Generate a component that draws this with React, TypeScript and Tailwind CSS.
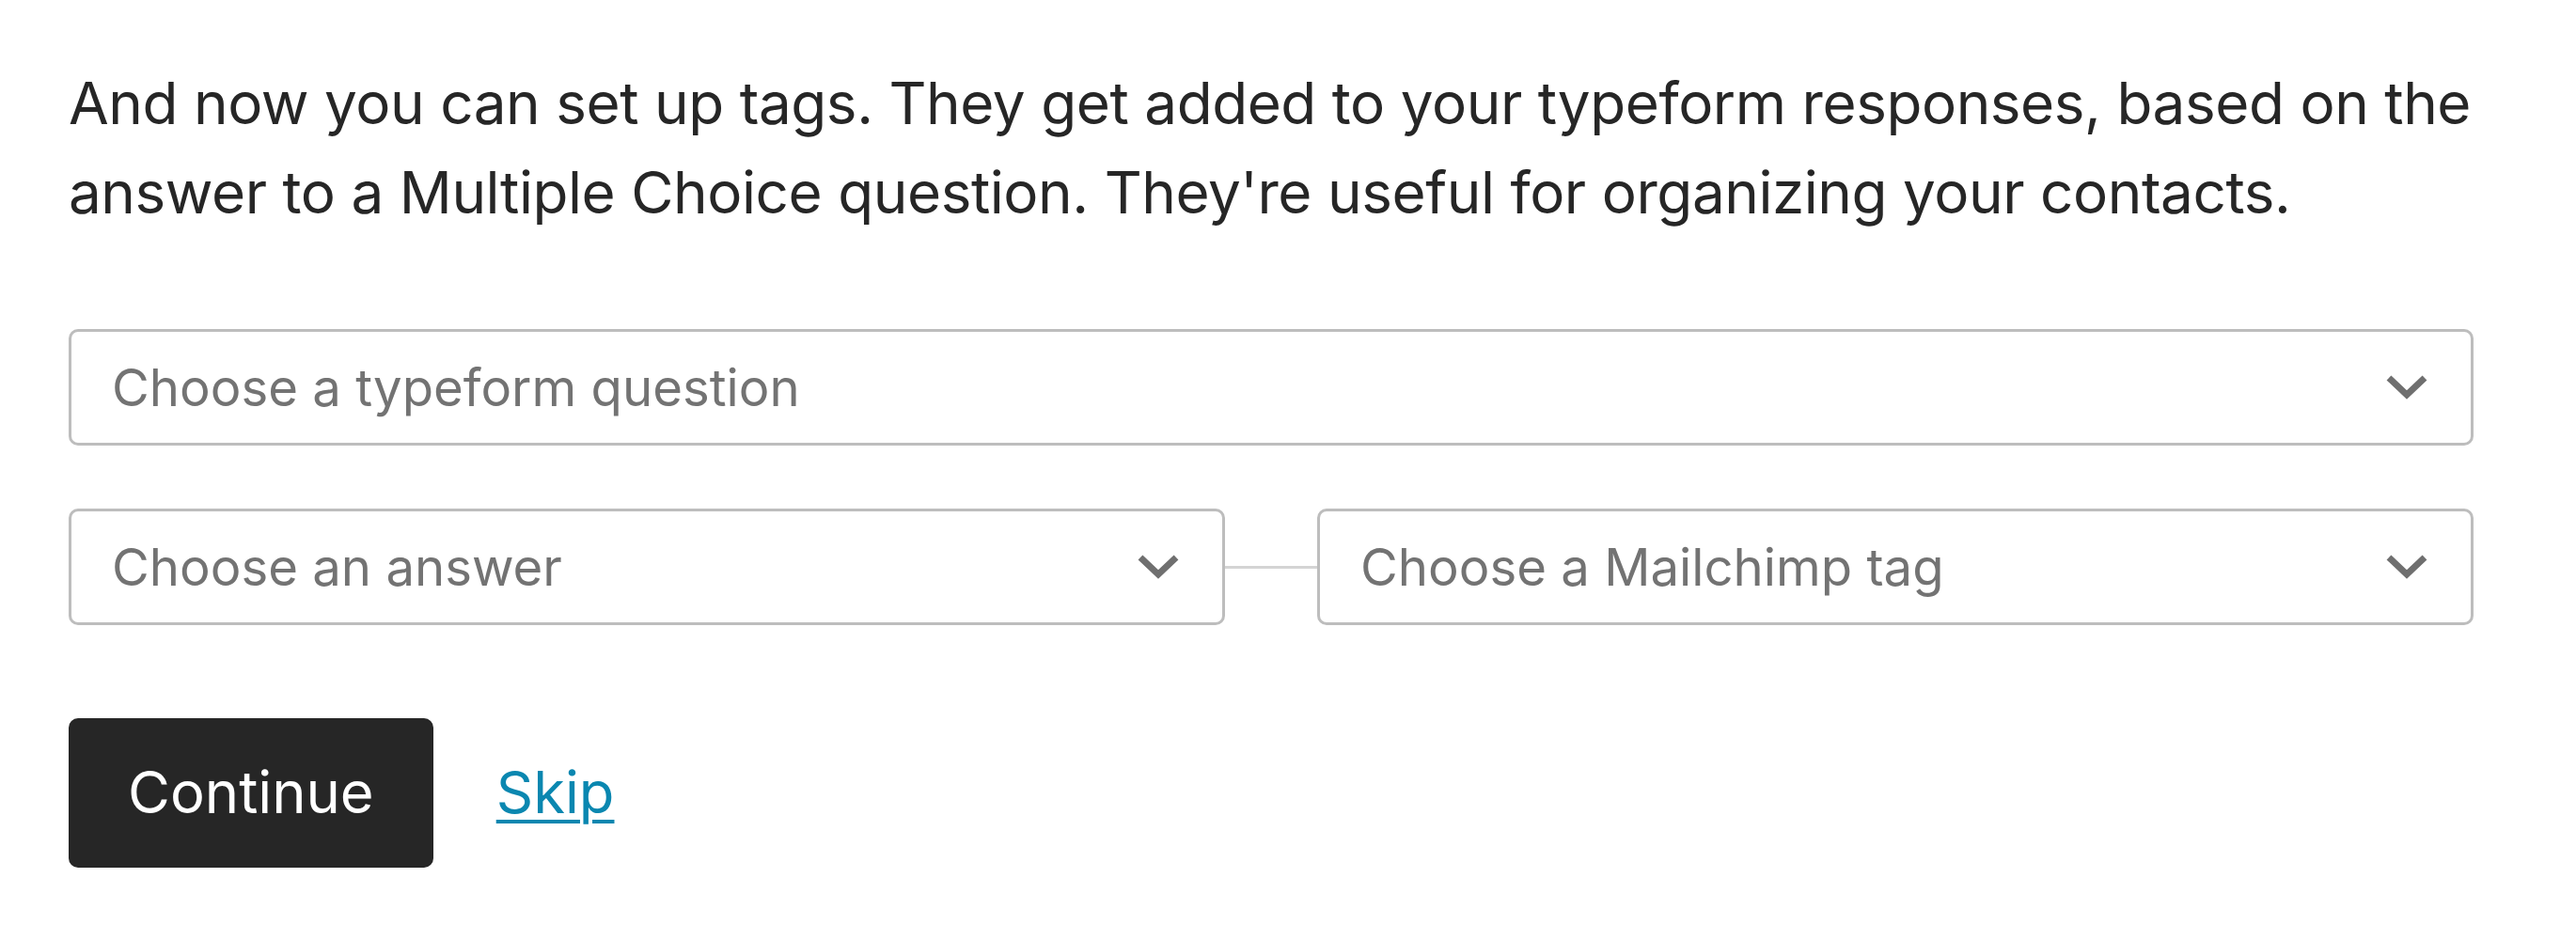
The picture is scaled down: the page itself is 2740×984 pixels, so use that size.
function Chevron() {
  return (
    <svg width="44" height="26" viewBox="0 0 44 26" fill="none" className="shrink-0">
      <path d="M3 3 L22 21 L41 3" stroke="#6f6f6f" strokeWidth="7" strokeLinejoin="miter" />
    </svg>
  )
}

function SelectBox({ placeholder, className = '' }: { placeholder: string; className?: string }) {
  return (
    <div
      className={`flex h-[124px] items-center justify-between rounded-[10px] border-[3px] border-[#bdbdbd] bg-white pl-[43px] pr-[46px] ${className}`}
    >
      <span className="text-[54.5px] leading-none text-[#737373]">{placeholder}</span>
      <Chevron />
    </div>
  )
}

export default function App() {
  return (
    <div
      className="min-h-screen bg-white pl-[73px] pt-[62px] text-[#262626]"
      style={{ fontFamily: 'Inter, "Noto Sans", sans-serif' }}
    >
      <div className="w-[2558px]">
        <p className="whitespace-nowrap text-[62px] leading-[95px] tracking-[-0.45px]">
          And now you can set up tags. They get added to your typeform responses, based on the
          <br />
          answer to a Multiple Choice question. They're useful for organizing your contacts.
        </p>

        <div className="mt-[98px] flex flex-col gap-[67px]">
          <SelectBox placeholder="Choose a typeform question" />
          <div className="flex items-center">
            <SelectBox placeholder="Choose an answer" className="w-[1230px]" />
            <div className="h-[3px] w-[98px] bg-[#d4d4d4]" />
            <SelectBox placeholder="Choose a Mailchimp tag" className="w-[1230px]" />
          </div>
        </div>

        <div className="mt-[99px] flex items-center gap-[67px]">
          <button className="h-[159px] rounded-[10px] bg-[#262626] px-[63px] text-[61.5px] text-white">
            Continue
          </button>
          <a href="#" className="text-[61.5px] text-[#0a87b0] underline decoration-[4px] underline-offset-[7px]">
            Skip
          </a>
        </div>
      </div>
    </div>
  )
}
